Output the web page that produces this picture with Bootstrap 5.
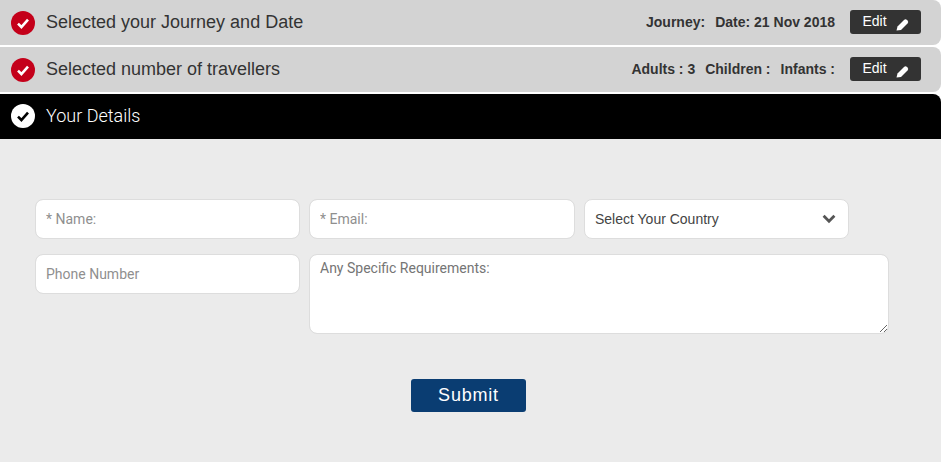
<!DOCTYPE html>
<html>
<head>
  <title>Your Details</title>
  <link href="https://cdn.jsdelivr.net/npm/bootstrap@5.3.0/dist/css/bootstrap.min.css" rel="stylesheet">
  <style>
    body { background: #fff; font-family: "Liberation Sans", Arial, sans-serif; }
    .step-bar { height: 45px; margin-bottom: 2px; padding: 0 20px 0 11px; background: #d3d3d3; color: #333; border-radius: 0 8px 8px 0; }
    .step-bar.step-open { margin-bottom: 0; padding-bottom: 2px; background: #000; color: #fff; border-radius: 0 8px 0 0; }
    .step-tick { width: 24px; height: 24px; flex: none; }
    .step-title { margin-left: 11px; font-size: 18px; }
    .step-open .step-title { font-family: Roboto, sans-serif; font-weight: 300; }
    .step-info { font-size: 14px; font-weight: 700; gap: 10px; margin-right: 15px; }
    .btn-edit { width: 71px; height: 24px; margin-top: -1px; padding: 0; background: #333; color: #fff; border: 0; border-radius: 3px; font-size: 14px; line-height: 20px; }
    .btn-edit:hover { background: #333; color: #fff; }
    .edit-label { margin-top: -2px; }
    .edit-pencil { margin: 5px 0 0 9px; }
    .details-panel { height: 323px; padding: 60px 0 0 35px; background: #ebebeb; }
    .field-row { gap: 9px; }
    .field-col { width: 265px; flex: none; }
    .field-col-wide { width: 266px; }
    .details-panel .form-control, .details-panel .form-select { height: 40px; padding: 0 10px; border: 1px solid #ddd; border-radius: 8px; font-size: 14px; box-shadow: none; }
    .details-panel .form-control { font-family: Roboto, sans-serif; }
    .details-panel .form-control::placeholder { color: #8f8f8f; }
    .details-panel .form-select { color: #444; font-family: "Liberation Sans", Arial, sans-serif; background-image: none; }
    .details-panel textarea.form-control { width: 580px; height: 80px; padding-top: 3px; }
    .details-panel textarea.form-control::placeholder { color: #757575; }
    .select-wrap { position: relative; }
    .select-chevron { position: absolute; top: 15px; right: 13px; width: 14px; height: 10px; pointer-events: none; }
    .row-first { margin-bottom: 15px; }
    .btn-submit { width: 115px; height: 33px; margin: 45px 0 0 376px; padding: 0; background: #0a3d72; color: #fff; border: 0; border-radius: 3px; font-size: 18px; font-weight: 500; letter-spacing: .8px; }
    .btn-submit:hover { background: #0a3d72; color: #fff; }
  </style>
</head>
<body>
  <div class="step-bar d-flex align-items-center">
    <svg class="step-tick" viewBox="0 0 24 24"><circle cx="12" cy="12" r="12" fill="#c4001a"/><path d="M7 12.6l3.4 3.4 6.6-7.4" fill="none" stroke="#fff" stroke-width="2.6"/></svg>
    <div class="step-title flex-grow-1">Selected your Journey and Date</div>
    <div class="step-info d-flex"><span>Journey:</span><span>Date: 21 Nov 2018</span></div>
    <button class="btn btn-edit d-flex align-items-center justify-content-center" type="button"><span class="edit-label">Edit</span>
      <svg class="edit-pencil" width="13" height="13" viewBox="0 0 13 13"><path d="M.5 12.5l1-4L8 2q1.5-1.5 3 0l.5.5q1.5 1.5 0 3L5 12z" fill="#fff"/></svg>
    </button>
  </div>
  <div class="step-bar d-flex align-items-center">
    <svg class="step-tick" viewBox="0 0 24 24"><circle cx="12" cy="12" r="12" fill="#c4001a"/><path d="M7 12.6l3.4 3.4 6.6-7.4" fill="none" stroke="#fff" stroke-width="2.6"/></svg>
    <div class="step-title flex-grow-1">Selected number of travellers</div>
    <div class="step-info d-flex"><span>Adults : 3</span><span>Children :</span><span>Infants :</span></div>
    <button class="btn btn-edit d-flex align-items-center justify-content-center" type="button"><span class="edit-label">Edit</span>
      <svg class="edit-pencil" width="13" height="13" viewBox="0 0 13 13"><path d="M.5 12.5l1-4L8 2q1.5-1.5 3 0l.5.5q1.5 1.5 0 3L5 12z" fill="#fff"/></svg>
    </button>
  </div>
  <div class="step-bar step-open d-flex align-items-center">
    <svg class="step-tick" viewBox="0 0 24 24"><circle cx="12" cy="12" r="12" fill="#fff"/><path d="M7 12.6l3.4 3.4 6.6-7.4" fill="none" stroke="#000" stroke-width="2.6"/></svg>
    <div class="step-title">Your Details</div>
  </div>

  <form class="details-panel">
    <div class="field-row row-first d-flex">
      <div class="field-col"><input type="text" class="form-control" placeholder="* Name:"></div>
      <div class="field-col field-col-wide"><input type="email" class="form-control" placeholder="* Email:"></div>
      <div class="field-col select-wrap">
        <select class="form-select"><option>Select Your Country</option></select>
        <svg class="select-chevron" viewBox="0 0 14 10"><path d="M1.6 1.8l5.4 5.4 5.4-5.4" fill="none" stroke="#555" stroke-width="2.8"/></svg>
      </div>
    </div>
    <div class="field-row d-flex">
      <div class="field-col"><input type="text" class="form-control" placeholder="Phone Number"></div>
      <textarea class="form-control" placeholder="Any Specific Requirements:"></textarea>
    </div>
    <button class="btn btn-submit" type="button">Submit</button>
  </form>
</body>
</html>
